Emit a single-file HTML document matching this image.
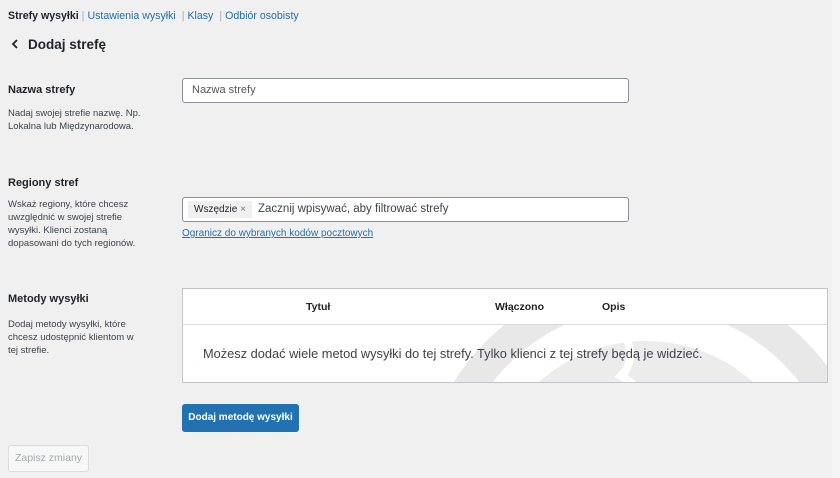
<!DOCTYPE html>
<html><head><meta charset="utf-8"><style>
*{margin:0;padding:0;box-sizing:border-box}
html,body{width:840px;height:478px;overflow:hidden}
body{background:#f0f0f1;font-family:"Liberation Sans",sans-serif;color:#1d2327;position:relative}
.a{position:absolute;white-space:nowrap}
.nav{top:10px;left:8px;font-size:10.6px;color:#2271b1}
.nav b{color:#1d2327}
.nav span.s{color:#a7aaad;margin:0 3px}
.lbl{font-size:11px;font-weight:bold;left:8px}
.desc{font-size:9.5px;line-height:13px;left:8px;color:#3c434a;white-space:normal}
.inp{position:absolute;left:182px;width:447px;height:25px;background:#fff;border:1px solid #8c8f94;border-radius:3px}
</style></head><body>
<div style="position:absolute;right:0;top:0;width:8px;height:478px;background:#f5f5f5"></div>
<div class="a nav"><b>Strefy wysyłki</b><span class="s">|</span>Ustawienia wysyłki <span class="s">|</span>Klasy <span class="s">|</span>Odbiór osobisty</div>
<div class="a" style="top:37px;left:10px;font-size:13.5px;font-weight:bold"><svg width="10" height="12" style="vertical-align:-1px;margin-right:8px"><path d="M7 2 L3 6 L7 10" fill="none" stroke="#1d2327" stroke-width="1.8"/></svg>Dodaj strefę</div>

<div class="a lbl" style="top:84px">Nazwa strefy</div>
<div class="a desc" style="top:107px;width:150px">Nadaj swojej strefie nazwę. Np. Lokalna lub Międzynarodowa.</div>
<div class="inp" style="top:78px"><span class="a" style="left:9px;top:5px;font-size:11px;color:#50575e">Nazwa strefy</span></div>

<div class="a lbl" style="top:177px">Regiony stref</div>
<div class="a desc" style="top:198px;width:135px">Wskaż regiony, które chcesz uwzględnić w swojej strefie wysyłki. Klienci zostaną dopasowani do tych regionów.</div>
<div class="inp" style="top:197px"><span class="a" style="left:5px;top:3px;height:17px;padding:3px 6px;background:#f0f0f1;font-size:10px">Wszędzie <span style="color:#757575">×</span></span><span class="a" style="left:75px;top:5px;font-size:11.5px;color:#3c434a">Zacznij wpisywać, aby filtrować strefy</span></div>
<div class="a" style="left:182px;top:228px;font-size:10px;color:#2271b1;text-decoration:underline">Ogranicz do wybranych kodów pocztowych</div>

<div class="a lbl" style="top:293px">Metody wysyłki</div>
<div class="a desc" style="top:318px;width:132px">Dodaj metody wysyłki, które chcesz udostępnić klientom w tej strefie.</div>
<div style="position:absolute;left:182px;top:288px;width:646px;height:95px;background:#fff;border:1px solid #c3c4c7;overflow:hidden">
<svg class="a" style="left:0;top:36px" width="646" height="60"><g transform="translate(463,176)"><circle r="210" fill="none" stroke="#e8e8e9" stroke-width="32"/><circle r="160" fill="#ececed"/><path d="M-20 -165 q10 25 -5 40 q20 10 30 40" fill="none" stroke="#fff" stroke-width="8"/></g></svg>
<div style="position:absolute;left:0;top:0;width:100%;height:36px;border-bottom:1px solid #dcdcde;background:#fff"></div>
<span class="a" style="left:123px;top:12px;font-size:10.5px;font-weight:bold">Tytuł</span>
<span class="a" style="left:312px;top:12px;font-size:10.5px;font-weight:bold">Włączono</span>
<span class="a" style="left:419px;top:12px;font-size:10.5px;font-weight:bold">Opis</span>
<span class="a" style="left:20px;top:57px;font-size:12.8px;color:#3c434a">Możesz dodać wiele metod wysyłki do tej strefy. Tylko klienci z tej strefy będą je widzieć.</span>
</div>
<div class="a" style="left:182px;top:404px;width:117px;height:28px;background:#2271b1;border-radius:3px;color:#fff;font-size:10px;font-weight:bold;text-align:center;line-height:28px">Dodaj metodę wysyłki</div>
<div class="a" style="left:8px;top:445px;width:81px;height:27px;background:#f6f7f7;border:1px solid #dcdcde;border-radius:3px;color:#a7aaad;font-size:10.5px;text-align:center;line-height:25px">Zapisz zmiany</div>
</body></html>
